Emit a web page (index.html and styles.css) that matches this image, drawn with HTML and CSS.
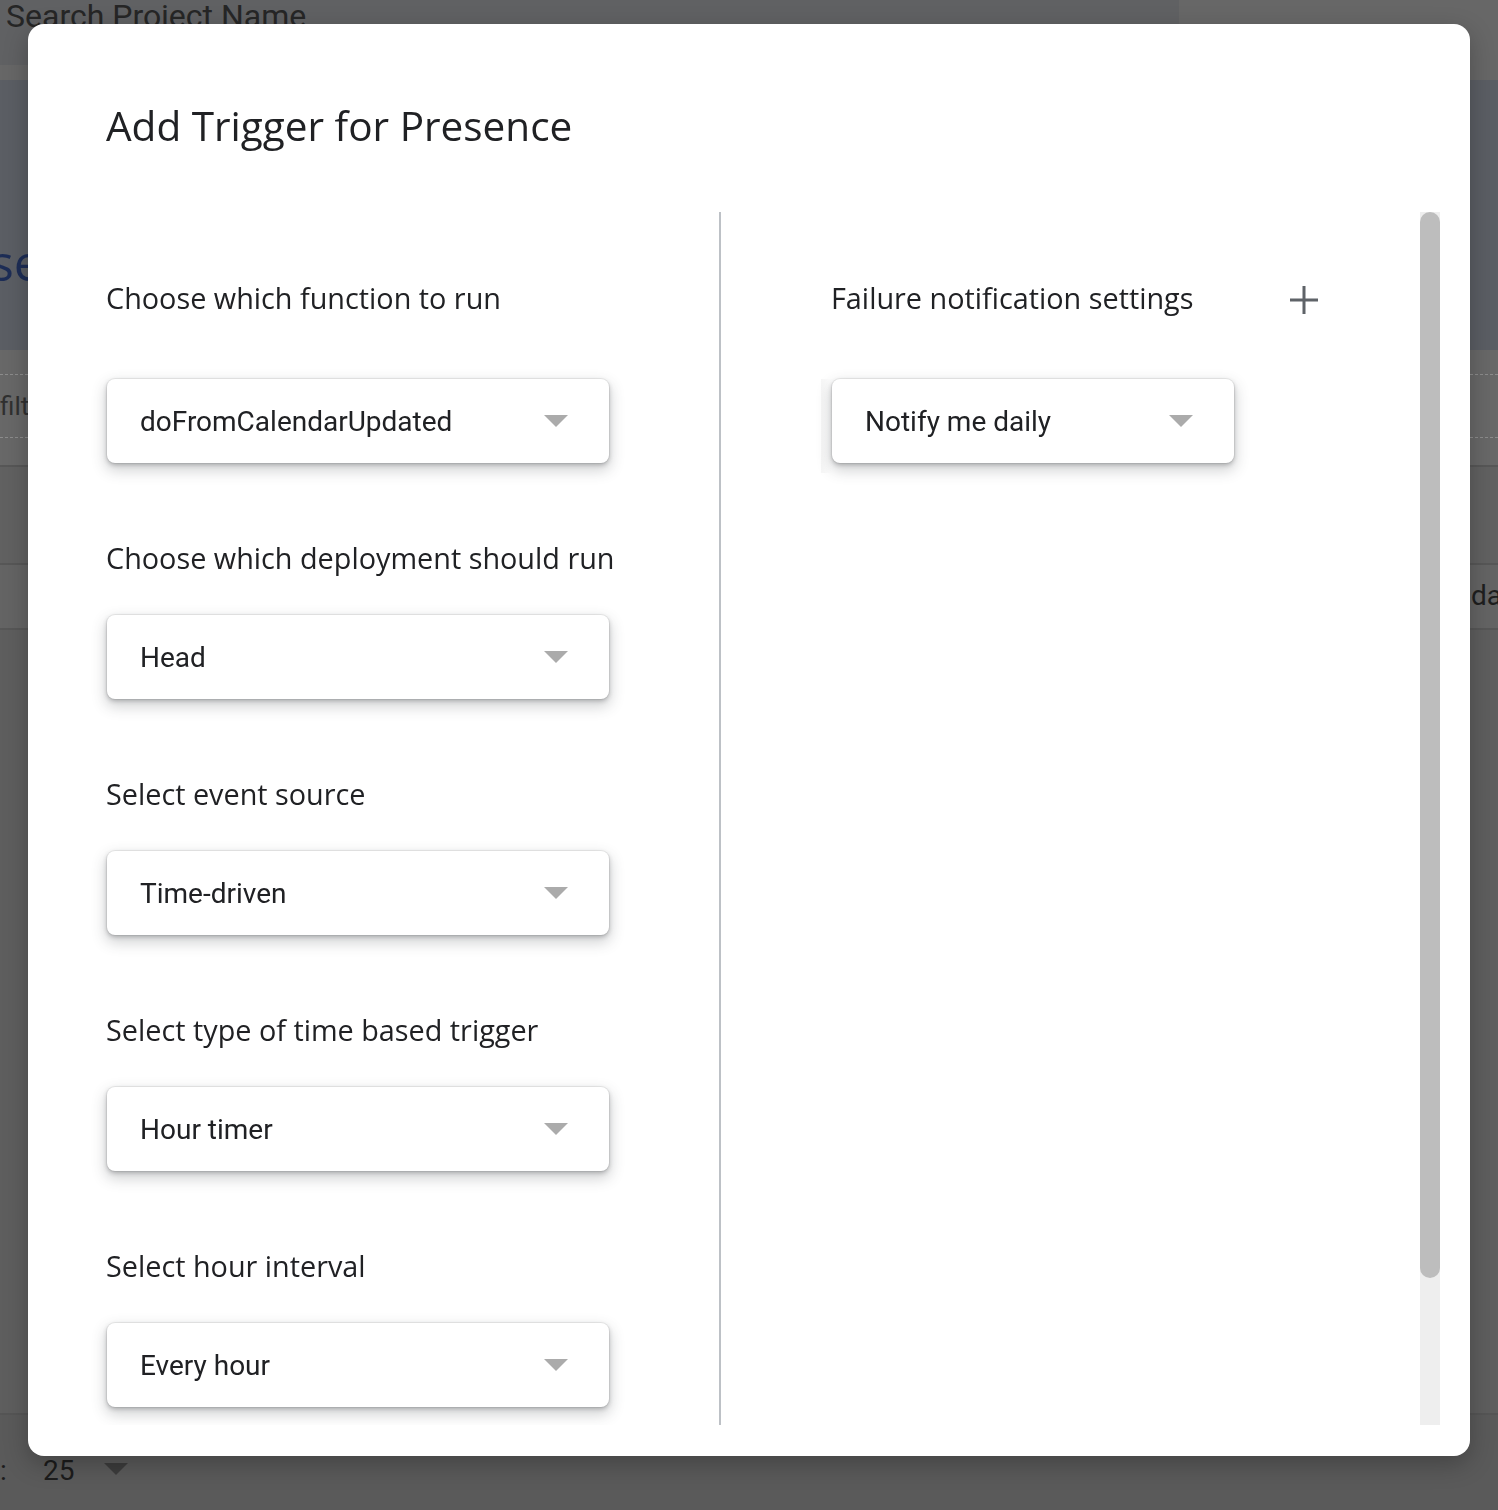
FILE: index.html
```html
<!DOCTYPE html>
<html lang="en">
<head>
    <meta charset="UTF-8">
    <title>Add Trigger for Presence</title>
    <link rel="stylesheet" href="styles.css">
</head>
<body>
    <div class="page">
        <div class="searchbar">
            <div class="search-input">Search Project Name</div>
            <div class="search-side"></div>
        </div>
        <div class="strip"></div>
        <div class="hero"><span class="hero-title">se</span></div>
        <div class="filter">
            <div class="filter-box">filter</div>
        </div>
        <div class="row row-a"></div>
        <div class="row row-b"><span class="row-text">da</span></div>
        <div class="row row-c"></div>
        <div class="footer">
            <span class="footer-label">:</span>
            <span class="footer-value">25</span>
            <span class="footer-arrow"></span>
        </div>
    </div>

    <div class="dialog">
        <h1 class="dialog-title">Add Trigger for Presence</h1>
        <div class="dialog-body">
            <div class="col-left">
                <div class="field field-first">
                    <div class="label">Choose which function to run</div>
                    <div class="dropdown">
                        <span>doFromCalendarUpdated</span>
                        <span class="arrow"></span>
                    </div>
                </div>
                <div class="field">
                    <div class="label">Choose which deployment should run</div>
                    <div class="dropdown">
                        <span>Head</span>
                        <span class="arrow"></span>
                    </div>
                </div>
                <div class="field">
                    <div class="label">Select event source</div>
                    <div class="dropdown">
                        <span>Time-driven</span>
                        <span class="arrow"></span>
                    </div>
                </div>
                <div class="field">
                    <div class="label">Select type of time based trigger</div>
                    <div class="dropdown">
                        <span>Hour timer</span>
                        <span class="arrow"></span>
                    </div>
                </div>
                <div class="field">
                    <div class="label">Select hour interval</div>
                    <div class="dropdown">
                        <span>Every hour</span>
                        <span class="arrow"></span>
                    </div>
                </div>
            </div>
            <div class="col-right">
                <div class="field field-first">
                    <div class="label-row">
                        <div class="label">Failure notification settings</div>
                        <svg class="plus" width="30" height="30" viewBox="0 0 30 30">
                            <path d="M15 1v28M1 15h28" stroke="#5f6368" stroke-width="3" fill="none"/>
                        </svg>
                    </div>
                    <div class="dropdown-wrap">
                        <div class="dropdown dropdown-small">
                            <span>Notify me daily</span>
                            <span class="arrow"></span>
                        </div>
                    </div>
                </div>
            </div>
            <div class="scrollbar">
                <div class="thumb"></div>
            </div>
        </div>
    </div>
</body>
</html>
```

FILE: styles.css
```css
body {
    margin: 0;
    padding: 0;
    font-family: Roboto, "Liberation Sans", sans-serif;
    background-color: #5c5c5c;
    overflow: hidden;
}
.page {
    height: 1510px;
}
.searchbar {
    display: flex;
    height: 65px;
}
.search-input {
    width: 1173px;
    background-color: #606163;
    color: #262626;
    font-size: 32px;
    line-height: 32px;
    padding-left: 6px;
    margin-top: -3px;
    padding-top: 3px;
}
.search-side {
    flex: 1;
    background-color: #676767;
}
.strip {
    height: 15px;
    background-color: #676767;
}
.hero {
    height: 270px;
    background-color: #5b5e64;
    position: relative;
    overflow: hidden;
}
.hero-title {
    position: absolute;
    left: -10px;
    top: 148px;
    font-family: "Open Sans", sans-serif;
    font-size: 50px;
    color: #1d2d56;
}
.filter {
    height: 115px;
    background-color: #686868;
    padding-top: 24px;
    box-sizing: border-box;
}
.filter-box {
    height: 62px;
    border-top: 1px dashed #8c8c8c;
    border-bottom: 1px dashed #8c8c8c;
    font-size: 26px;
    line-height: 62px;
    color: #303030;
}
.row {
    border-top: 2px solid #575757;
    box-sizing: border-box;
    position: relative;
}
.row-a {
    height: 98px;
    background-color: #616161;
}
.row-b {
    height: 65px;
    background-color: #646464;
}
.row-text {
    position: absolute;
    left: 1471px;
    top: 14px;
    font-size: 28px;
    color: #1e1e1e;
}
.row-c {
    height: 785px;
    background-color: #5e5e5e;
}
.footer {
    height: 97px;
    background-color: #5a5a5a;
    border-top: 2px solid #555;
    box-sizing: border-box;
    display: flex;
    padding-top: 26px;
    align-items: flex-start;
    font-size: 28px;
    color: #1c1c1c;
}
.footer-label {
    width: 43px;
    line-height: 60px;
}
.footer-value {
    line-height: 60px;
    width: 61px;
}
.footer-arrow {
    margin-top: 22px;
    width: 0;
    height: 0;
    border-left: 12px solid transparent;
    border-right: 12px solid transparent;
    border-top: 12px solid #3c3c3c;
}

/* dialog */
.dialog {
    position: fixed;
    top: 24px;
    left: 28px;
    width: 1442px;
    height: 1432px;
    background-color: white;
    border-radius: 16px;
    box-shadow: 0 8px 24px rgba(0, 0, 0, 0.25);
    display: flex;
    flex-direction: column;
    box-sizing: border-box;
    padding-bottom: 31px;
}
.dialog-title {
    margin: 0;
    padding: 76px 78px 0;
    height: 188px;
    box-sizing: border-box;
    font-family: "Open Sans", sans-serif;
    font-size: 40.5px;
    line-height: 52px;
    font-weight: 500;
    color: #202124;
}
.dialog-body {
    flex: 1;
    display: flex;
    overflow: hidden;
}
.col-left {
    width: 693px;
    box-sizing: border-box;
    padding-left: 78px;
    border-right: 2px solid #bdc1c6;
}
.col-right {
    flex: 1;
    padding-left: 100px;
}
.field {
    padding-top: 75px;
}
.field-first {
    padding-top: 66px;
}
.label {
    font-family: "Open Sans", sans-serif;
    font-size: 28.8px;
    line-height: 40px;
    color: #202124;
    margin-bottom: 37px;
}
.field-first .label {
    margin-bottom: 61px;
}
.col-right .label {
    margin-left: 10px;
}
.label-row {
    display: flex;
    justify-content: space-between;
    align-items: center;
    width: 498px;
}
.plus {
    margin-bottom: 57px;
}
.dropdown-wrap {
    padding: 0 0 10px 11px;
    width: 402px;
    background: linear-gradient(to right, #f6f6f6, white 11px);
}
.dropdown {
    width: 502px;
    height: 84px;
    margin-left: 1px;
    box-sizing: border-box;
    padding: 0 41px 0 33px;
    display: flex;
    align-items: center;
    justify-content: space-between;
    border-radius: 8px;
    background-color: white;
    box-shadow: 0 0 0 1px rgba(60, 64, 67, 0.08), 0 2px 4px rgba(60, 64, 67, 0.3), 0 6px 14px 2px rgba(60, 64, 67, 0.22);
    font-size: 28px;
    color: #202124;
}
.dropdown-small {
    width: 402px;
    margin-left: 0;
}
.arrow {
    width: 0;
    height: 0;
    border-left: 12px solid transparent;
    border-right: 12px solid transparent;
    border-top: 12px solid #ababab;
}
.scrollbar {
    width: 20px;
    margin-right: 30px;
    background-color: #eeeeee;
}
.thumb {
    height: 1066px;
    background-color: #bdbdbd;
    border-radius: 10px;
}
```
